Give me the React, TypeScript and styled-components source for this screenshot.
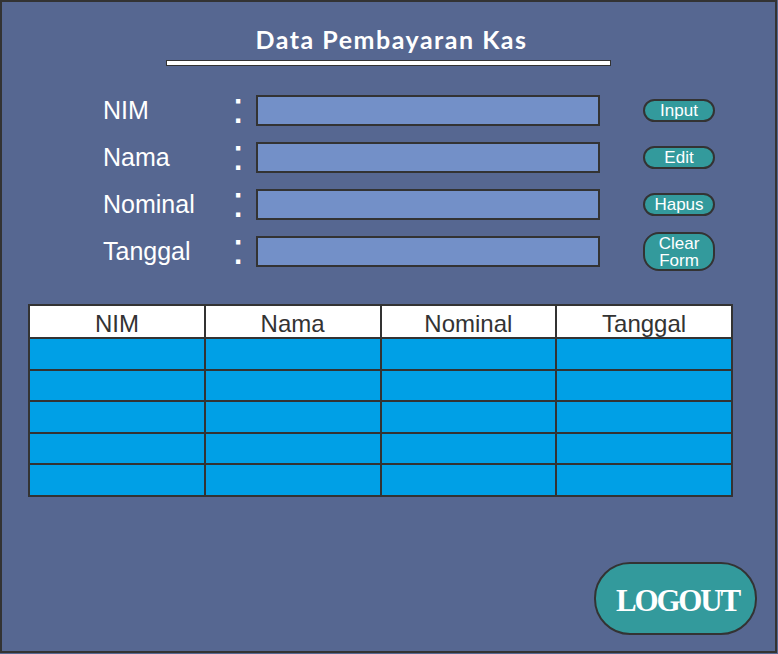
import styled, { createGlobalStyle } from 'styled-components';

const GlobalStyle = createGlobalStyle`
  body {
    margin: 0;
    background: #566791;
    font-family: 'Liberation Sans', Arial, sans-serif;
  }
`;

const Frame = styled.div`
  box-sizing: border-box;
  width: 777px;
  height: 653px;
  border: 2px solid #333;
  background: #566791;
  display: flex;
  flex-direction: column;
  align-items: center;
`;

const Title = styled.h1`
  margin: 22px 0 0 6px;
  font-family: 'Lato', 'Noto Sans', sans-serif;
  font-weight: 700;
  font-size: 25px;
  letter-spacing: 1.5px;
  line-height: 30px;
  color: #fff;
`;

const Underline = styled.div`
  box-sizing: border-box;
  width: 445px;
  height: 6px;
  margin-top: 6px;
  background: #fff;
  border: 1px solid #333;
`;

const FormGrid = styled.div`
  align-self: flex-start;
  margin: 29px 0 0 101px;
  display: grid;
  grid-template-columns: 133px 20px 344px 115px;
  grid-template-rows: repeat(4, 31px);
  row-gap: 16px;
  align-items: center;
`;

const Label = styled.div`
  font-size: 25px;
  color: #fff;
  line-height: 31px;
`;

const Colon = styled.div`
  font-size: 44px;
  line-height: 31px;
  color: #fff;
  margin: -6px 0 0 -4px;
`;

const Field = styled.input`
  box-sizing: border-box;
  width: 344px;
  height: 31px;
  margin: 0;
  background: #7390c8;
  border: 2px solid #333;
  outline: none;
`;

const SideButton = styled.button<{ $tall?: boolean }>`
  justify-self: end;
  box-sizing: border-box;
  width: 72px;
  height: ${p => (p.$tall ? '39px' : '23px')};
  padding: ${p => (p.$tall ? '1px 0 0' : '0')};
  background: #339a9c;
  border: 2px solid #333;
  border-radius: ${p => (p.$tall ? '16px' : '12px')};
  color: #fff;
  font-family: 'Liberation Sans', Arial, sans-serif;
  font-size: 17px;
  line-height: 17px;
`;

const Table = styled.table`
  align-self: flex-start;
  margin: 37px 0 0 26px;
  border-collapse: collapse;
  table-layout: fixed;
  width: 705px;
`;

const HeadCell = styled.th`
  height: 27px;
  padding: 4px 0 0;
  background: #fff;
  border: 2px solid #333;
  color: #333;
  font-weight: 400;
  font-size: 24px;
  line-height: 27px;
  text-align: center;
  vertical-align: bottom;
`;

const Cell = styled.td`
  height: 29.6px;
  padding: 0;
  background: #00a0e6;
  border: 2px solid #333;
`;

const Footer = styled.div`
  align-self: stretch;
  display: flex;
  justify-content: flex-end;
  margin-top: auto;
  padding: 0 18px 16px 0;
`;

const LogoutButton = styled.button`
  box-sizing: border-box;
  width: 163px;
  height: 73px;
  background: #339a9c;
  border: 2px solid #333;
  border-radius: 36px;
  color: #fff;
  font-family: 'Liberation Serif', 'Times New Roman', serif;
  font-weight: 700;
  font-size: 31px;
  letter-spacing: -2.2px;
  padding: 4px 0 0 4px;
`;

const fields = ['NIM', 'Nama', 'Nominal', 'Tanggal'];
const actions = ['Input', 'Edit', 'Hapus', 'Clear Form'];
const columns = ['NIM', 'Nama', 'Nominal', 'Tanggal'];
const rows = [0, 1, 2, 3, 4];

export default function App() {
  return (
    <>
      <GlobalStyle />
      <Frame>
        <Title>Data Pembayaran Kas</Title>
        <Underline />
        <FormGrid>
          {fields.map((f, i) => [
            <Label key={f + 'l'}>{f}</Label>,
            <Colon key={f + 'c'}>:</Colon>,
            <Field key={f + 'f'} />,
            <SideButton key={f + 'b'} $tall={i === 3}>
              {actions[i]}
            </SideButton>,
          ])}
        </FormGrid>
        <Table>
          <thead>
            <tr>
              {columns.map(c => (
                <HeadCell key={c}>{c}</HeadCell>
              ))}
            </tr>
          </thead>
          <tbody>
            {rows.map(r => (
              <tr key={r}>
                {columns.map(c => (
                  <Cell key={c} />
                ))}
              </tr>
            ))}
          </tbody>
        </Table>
        <Footer>
          <LogoutButton>LOGOUT</LogoutButton>
        </Footer>
      </Frame>
    </>
  );
}
